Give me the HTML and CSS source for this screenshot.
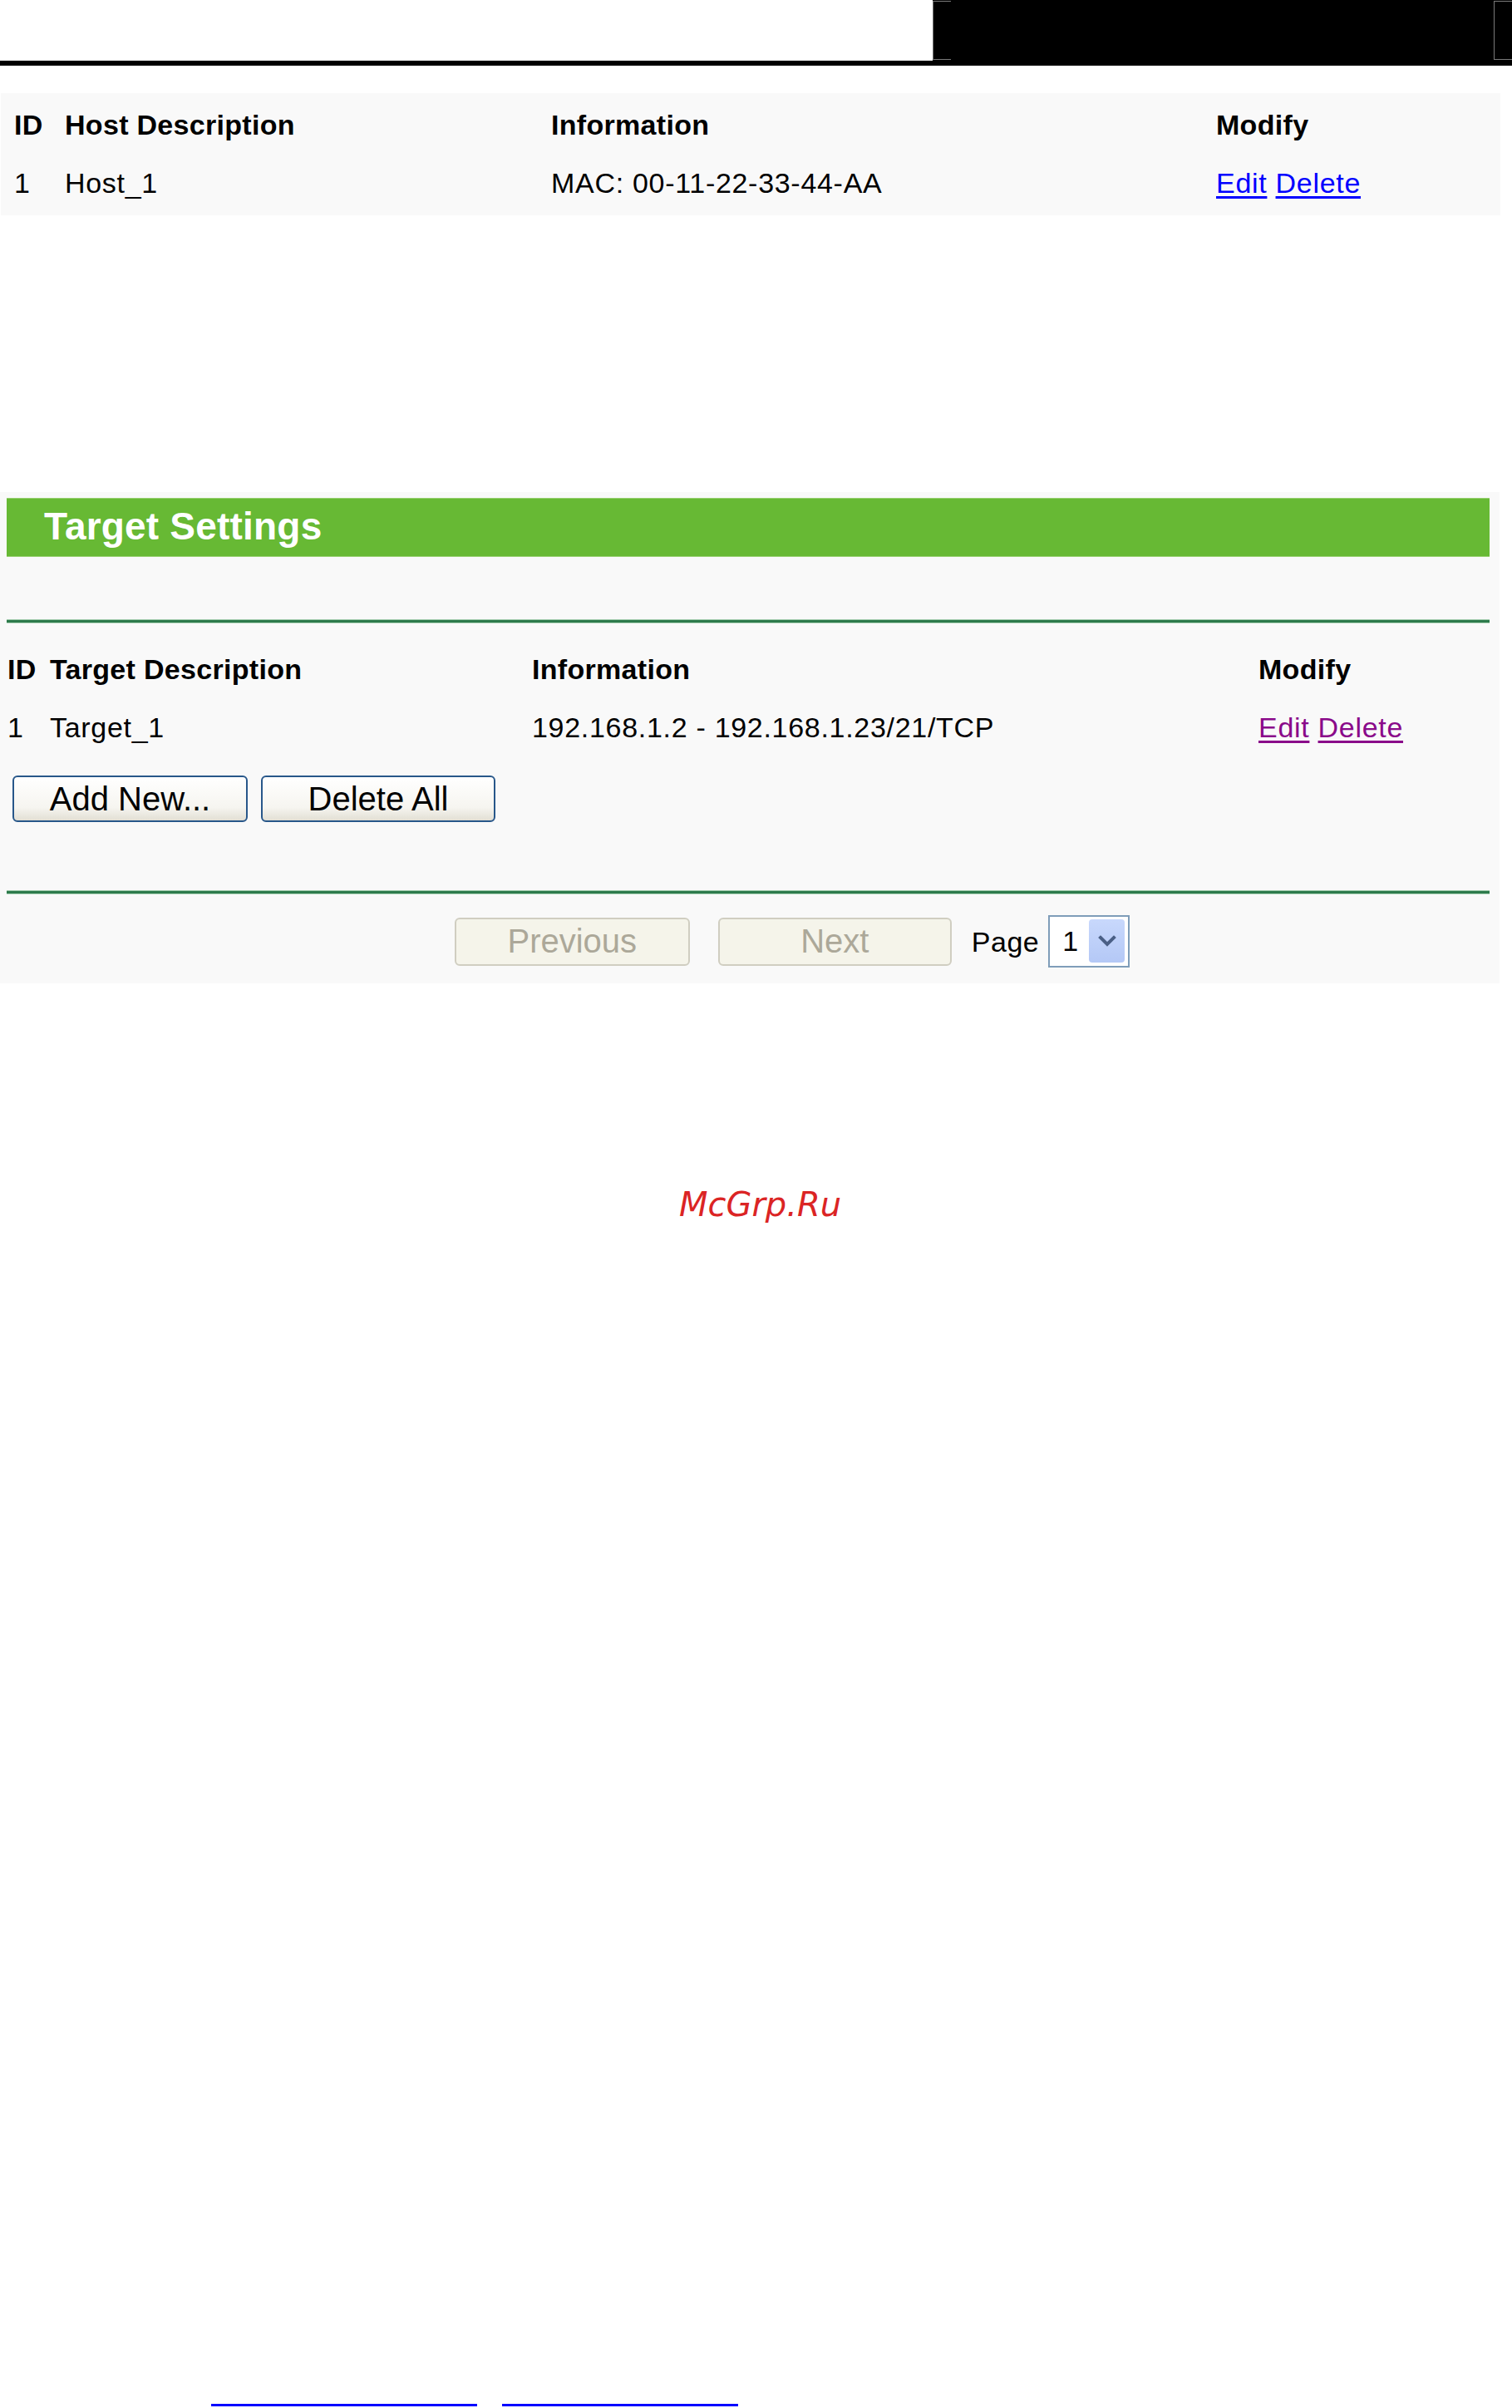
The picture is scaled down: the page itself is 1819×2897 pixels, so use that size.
FILE: index.html
```html
<!DOCTYPE html>
<html>
<head>
<meta charset="utf-8">
<title>Target Settings</title>
<link rel="stylesheet" href="styles.css">
</head>
<body>
<div class="topbar">
  <div class="blackbox">
    <span class="mark"></span>
    <span class="mark"></span>
  </div>
</div>
<div class="toprule"></div>

<div class="host">
  <div class="grid host-grid">
    <div class="th">ID</div>
    <div class="th">Host Description</div>
    <div class="th">Information</div>
    <div class="th">Modify</div>
    <div class="td">1</div>
    <div class="td">Host_1</div>
    <div class="td">MAC: 00-11-22-33-44-AA</div>
    <div class="td"><a class="lnk blue" href="#">Edit</a> <a class="lnk blue" href="#">Delete</a></div>
  </div>
</div>

<div class="target">
  <div class="titlebar">Target Settings</div>
  <div class="gline first"></div>
  <div class="grid target-grid">
    <div class="th">ID</div>
    <div class="th">Target Description</div>
    <div class="th">Information</div>
    <div class="th">Modify</div>
    <div class="td">1</div>
    <div class="td">Target_1</div>
    <div class="td">192.168.1.2 - 192.168.1.23/21/TCP</div>
    <div class="td"><a class="lnk purple" href="#">Edit</a> <a class="lnk purple" href="#">Delete</a></div>
  </div>
  <div class="actions">
    <button class="btn">Add New...</button>
    <button class="btn">Delete All</button>
  </div>
  <div class="gline second"></div>
  <div class="pager">
    <button class="btn disabled" disabled>Previous</button>
    <button class="btn disabled" disabled>Next</button>
    <span class="page-label">Page</span>
    <div class="select">
      <span class="select-value">1</span>
      <span class="select-arrow">
        <svg width="22" height="14" viewBox="0 0 22 14"><path d="M3 3 L11 11 L19 3" fill="none" stroke="#4a5f86" stroke-width="4" stroke-linecap="square"/></svg>
      </span>
    </div>
  </div>
</div>

<div class="watermark">McGrp.Ru</div>

<div class="bottom-links">
  <span class="uline w1"></span>
  <span class="uline w2"></span>
</div>
</body>
</html>
```

FILE: styles.css
```css
html, body {
  margin: 0;
  padding: 0;
  background: #ffffff;
}
body {
  font-family: "Liberation Sans", Arial, sans-serif;
  color: #000;
  overflow: hidden;
}

/* top bar */
.topbar {
  height: 73px;
  display: flex;
  justify-content: flex-end;
}
.blackbox {
  width: 697px;
  height: 73px;
  background: #000;
  display: flex;
  justify-content: space-between;
  align-items: flex-start;
  padding-top: 1px;
  box-sizing: border-box;
}
.mark {
  width: 22px;
  height: 71px;
  border: 1px solid #7a7a7a;
  border-right: none;
  box-sizing: border-box;
}
.toprule {
  height: 6px;
  background: #000;
}

/* generic grid tables */
.grid {
  display: grid;
  font-size: 34px;
  line-height: 70px;
  white-space: nowrap;
}
.th { font-weight: bold; letter-spacing: 0.3px; }
.td { font-weight: normal; letter-spacing: 0.7px; }

.host {
  margin: 33px 0 0 1px;
  width: 1804px;
  background: #f9f9f9;
  padding: 3px 0 4px 16px;
  box-sizing: border-box;
}
.host-grid {
  grid-template-columns: 61px 585px 800px 1fr;
}

.lnk { text-decoration: underline; text-underline-offset: 4px; }
.lnk.blue { color: #0000ff; }
.lnk.purple { color: #8a0a8a; }

/* target section */
.target {
  margin-top: 333px;
  width: 1804px;
  background: #f9f9f9;
  padding: 7px 0 19px 0;
  box-sizing: border-box;
}
.titlebar {
  margin: 0 12px 0 8px;
  height: 71px;
  box-sizing: border-box;
  background: #67b934;
  border-top: 1px solid #95cf6e;
  border-bottom: 1px solid #95cf6e;
  color: #fff;
  font-weight: bold;
  font-size: 46px;
  line-height: 66px;
  padding-left: 45px;
  letter-spacing: 0.2px;
}
.gline {
  margin: 0 12px 0 8px;
  height: 5px;
  background: linear-gradient(#9cc8a8 0, #9cc8a8 1px, #2d7b4c 1px, #2d7b4c 4px, #b6d8bf 4px);
}
.gline.first { margin-top: 75px; }
.gline.second { margin-top: 82px; }

.target-grid {
  margin-top: 20px;
  padding-left: 9px;
  grid-template-columns: 51px 580px 874px 1fr;
}

.actions {
  margin-top: 23px;
  padding-left: 15px;
  display: flex;
  gap: 16px;
}

.btn {
  width: 283px;
  height: 56px;
  padding: 0;
  font-family: "Liberation Sans", Arial, sans-serif;
  font-size: 40px;
  color: #000;
  border: 2px solid #28578a;
  border-radius: 6px;
  background: linear-gradient(#ffffff 0%, #f6f5f0 70%, #e2dfd4 100%);
  box-sizing: border-box;
}
.btn + .btn { width: 282px; }

.pager {
  margin-top: 25px;
  height: 63px;
  display: flex;
  align-items: center;
  justify-content: center;
  padding-left: 102px;
}
.btn.disabled {
  height: 58px;
  color: #aca899;
  border: 2px solid #d0cec1;
  background: #f5f4ea;
}
.pager .btn.disabled:first-child { width: 283px; margin-right: 34px; }
.pager .btn.disabled + .btn.disabled { width: 281px; margin-right: 24px; }

.page-label {
  font-size: 34px;
  line-height: 40px;
  margin-right: 11px;
  letter-spacing: 0.5px;
}
.select {
  width: 98px;
  height: 63px;
  border: 2px solid #7f9db9;
  background: #fff;
  box-sizing: border-box;
  display: flex;
  align-items: flex-start;
  padding: 3px 4px 4px 15px;
}
.select-value {
  font-size: 34px;
  line-height: 52px;
  flex: 1;
}
.select-arrow {
  width: 43px;
  height: 52px;
  border-radius: 4px;
  background: linear-gradient(#c8d8fc, #b4c8f6);
  display: flex;
  align-items: center;
  justify-content: center;
}

/* watermark */
.watermark {
  margin-top: 242px;
  padding-left: 10px;
  text-align: center;
  font-family: "DejaVu Sans", sans-serif;
  font-style: italic;
  font-size: 40px;
  line-height: 48px;
  color: #db2424;
}

.bottom-links {
  margin-top: 1419px;
  padding-left: 254px;
  display: flex;
  gap: 30px;
}
.uline {
  display: block;
  height: 3px;
  background: #0000ff;
}
.uline.w1 { width: 320px; }
.uline.w2 { width: 284px; }
```
